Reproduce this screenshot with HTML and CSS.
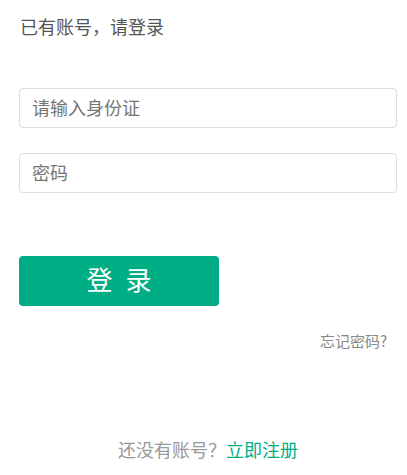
FILE: index.html
```html
<!DOCTYPE html>
<html lang="zh-CN">
<head>
<meta charset="utf-8">
<title>登录</title>
<link rel="stylesheet" href="styles.css">
</head>
<body>
<div class="page">
  <h1 class="title">已有账号，请登录</h1>
  <form class="form">
    <input class="field" type="text" placeholder="请输入身份证">
    <input class="field" type="password" placeholder="密码">
    <button class="login" type="button">登 录</button>
  </form>
  <div class="forgot"><a href="#">忘记密码?</a></div>
  <div class="register">还没有账号？<a href="#">立即注册</a></div>
</div>
</body>
</html>
```

FILE: styles.css
```css
* { box-sizing: border-box; }
html, body {
  margin: 0;
  padding: 0;
  background: #fff;
}
body {
  font-family: "Noto Sans CJK SC", "Noto Sans", sans-serif;
  color: #555;
}
.page {
  width: 378px;
  margin-left: 19px;
  display: flex;
  flex-direction: column;
}
.title {
  margin: 14px 0 0 1px;
  font-size: 18px;
  line-height: 24px;
  font-weight: normal;
  color: #555;
}
.form {
  margin-top: 50px;
  display: flex;
  flex-direction: column;
  align-items: flex-start;
}
.field {
  width: 378px;
  height: 40px;
  border: 1px solid #ddd;
  border-radius: 4px;
  padding: 0 12px 2px 12px;
  font-family: inherit;
  font-size: 18px;
  color: #555;
  outline: none;
  margin: 0 0 25px 0;
}
.field::placeholder { color: #757575; }
.login {
  margin-top: 38px;
  width: 200px;
  height: 50px;
  border: none;
  border-radius: 4px;
  background: #00ae85;
  color: #fff;
  font-family: inherit;
  font-size: 26px;
  line-height: 46px;
  padding: 0 0 4px 0;
  word-spacing: 7px;
}
.forgot {
  margin-top: 25px;
  padding-right: 10px;
  text-align: right;
  font-size: 15px;
  line-height: 20px;
}
.forgot a {
  color: #888;
  text-decoration: none;
}
.register {
  margin-top: 86px;
  text-align: center;
  font-size: 18px;
  line-height: 24px;
  color: #999;
}
.register a {
  color: #00ae85;
  text-decoration: none;
}
```
